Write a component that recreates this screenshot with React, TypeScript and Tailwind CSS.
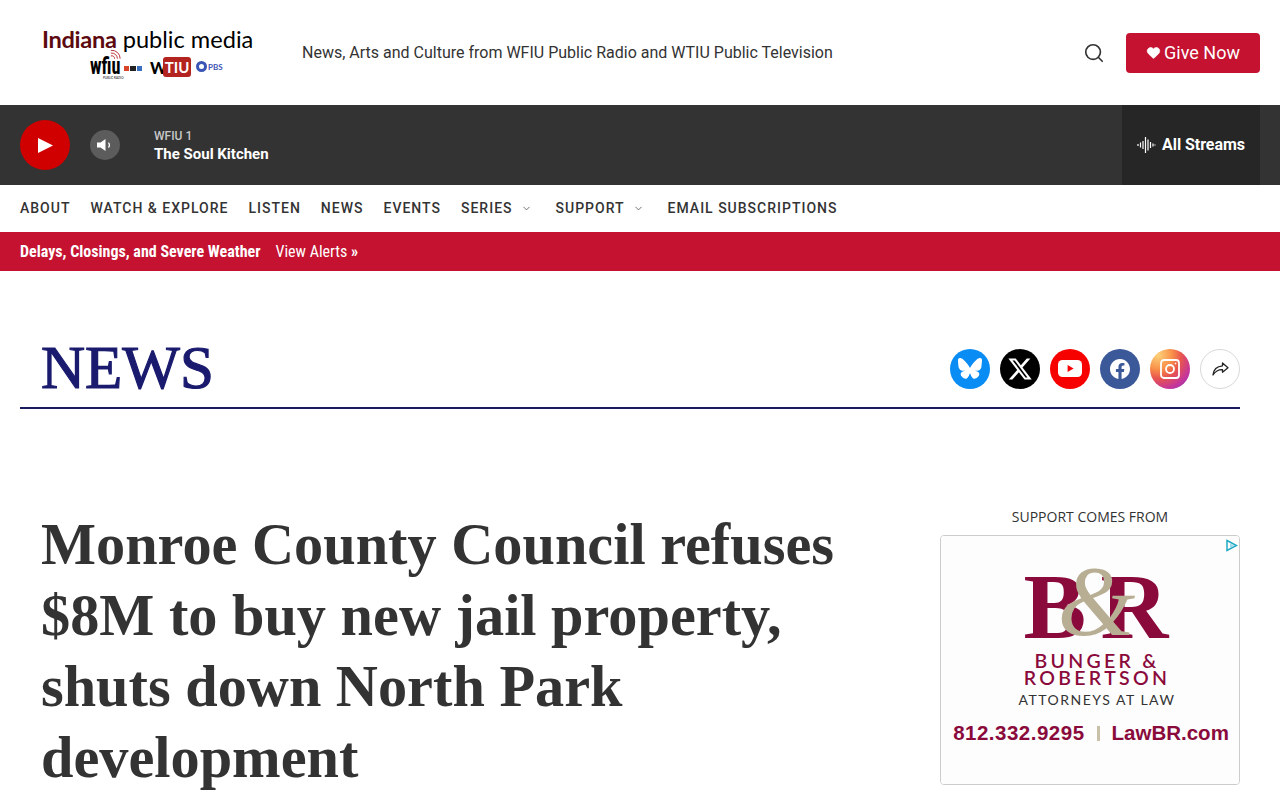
import { ChevronDown, Search, Heart } from 'lucide-react'

const roboto = { fontFamily: 'Roboto, sans-serif' }

const navItems = [
  { label: 'ABOUT' },
  { label: 'WATCH & EXPLORE' },
  { label: 'LISTEN' },
  { label: 'NEWS' },
  { label: 'EVENTS' },
  { label: 'SERIES', menu: true },
  { label: 'SUPPORT', menu: true },
  { label: 'EMAIL SUBSCRIPTIONS' },
]

function Logo() {
  return (
    <div className="w-[232px] ml-[22px] font-['Lato',sans-serif]">
      <div className="text-[23.6px] leading-[28px] text-black whitespace-nowrap h-[28px] -mt-[1px]">
        <span className="font-bold text-[#5c0a0f] tracking-[-0.3px]">Indiana</span> public media
      </div>
      <div className="flex items-start h-[26px] mt-[1px]">
        <div className="relative ml-[48px] w-[32px] h-[26px]">
          <span className="absolute left-0 top-[-1px] text-[24px] leading-[26px] font-bold text-black font-['Roboto_Condensed',sans-serif] scale-x-[0.76] origin-left">wfiu</span>
          <svg className="absolute left-[19px] top-[-5px]" width="13" height="12" viewBox="0 0 14 12" fill="none" stroke="#b3272d" strokeWidth="1">
            <path d="M2 1a9 9 0 0 1 10 9" />
            <path d="M2 4a6 6 0 0 1 7 6" />
            <path d="M2 7a3 3 0 0 1 4 3" />
          </svg>
          <span className="absolute left-[13px] top-[23px] text-[3px] leading-[3px] text-black whitespace-nowrap">PUBLIC RADIO</span>
        </div>
        <div className="flex mt-[12px] ml-[2px] h-[5px] w-[18px]">
          <span className="flex-1 bg-[#d8442a]" />
          <span className="flex-1 ml-[1px] bg-[#222]" />
          <span className="flex-1 ml-[1px] bg-[#3a6fc0]" />
        </div>
        <span className="ml-[8px] mt-[4px] w-[14px] text-[16px] leading-[20px] font-black text-black">W</span>
        <span className="ml-[-1px] mt-[3px] w-[28px] h-[20px] bg-[#b3231f] rounded-[3px] text-white text-[15px] leading-[20px] font-bold text-center">TIU</span>
        <span className="ml-[5px] mt-[7px] flex items-center text-[#3a55b5] text-[8px] leading-[12px] font-bold">
          <span className="w-[11px] h-[11px] rounded-full border-[3px] border-[#3a55b5] mr-[1px]" />
          PBS
        </span>
      </div>
    </div>
  )
}

function SocialIcons() {
  return (
    <div className="flex gap-[10px] mt-[1px]">
      <div className="w-10 h-10 rounded-full bg-[#0a8cf5] flex items-center justify-center">
        <svg width="24" height="22" viewBox="0 0 24 22" fill="#fff">
          <path d="M5.2 1.5C8 3.6 10.9 7.800 12 10c1.100-2.200 4-6.400 6.800-8.500C20.800 0 24-1.100 24 2.500c0 .7-.4 6-.7 6.900-.8 3-3.900 3.800-6.600 3.300 4.700.8 5.900 3.500 3.300 6.100-4.900 5-7-1.300-7.600-2.900-.1-.3-.2-.4-.4-.4s-.3.100-.4.400c-.6 1.600-2.700 7.900-7.600 2.900-2.600-2.600-1.400-5.300 3.300-6.100-2.700.5-5.800-.3-6.600-3.300C.4 8.500 0 3.200 0 2.500 0-1.100 3.200 0 5.200 1.500z" />
        </svg>
      </div>
      <div className="w-10 h-10 rounded-full bg-black flex items-center justify-center">
        <svg width="26" height="26" viewBox="0 0 24 24" fill="#fff">
          <path d="M18.244 2.250h3.308l-7.227 8.260 8.502 11.240H16.170l-5.214-6.817L4.990 21.750H1.680l7.730-8.835L1.254 2.250H8.080l4.713 6.231zm-1.161 17.520h1.833L7.084 4.126H5.117z" />
        </svg>
      </div>
      <div className="w-10 h-10 rounded-full bg-[#f70000] flex items-center justify-center">
        <svg width="24" height="17" viewBox="0 0 24 17">
          <rect width="24" height="17" rx="4.500" fill="#fff" />
          <path d="M9.600 5v7l6-3.500z" fill="#f70000" />
        </svg>
      </div>
      <div className="w-10 h-10 rounded-full bg-[#3b5998] flex items-center justify-center">
        <svg width="20" height="20" viewBox="0 0 24 24" fill="#fff">
          <path d="M24 12.070C24 5.400 18.630 0 12 0S0 5.400 0 12.070c0 6.030 4.390 11.030 10.130 11.930v-8.440H7.080v-3.490h3.050V9.410c0-3.020 1.790-4.690 4.530-4.690 1.310 0 2.690.24 2.690.24v2.970h-1.510c-1.490 0-1.960.93-1.960 1.880v2.260h3.330l-.53 3.490h-2.800V24C19.610 23.100 24 18.100 24 12.070z" />
        </svg>
      </div>
      <div className="w-10 h-10 rounded-full bg-[radial-gradient(circle_at_20%_15%,#fcd27a_0%,#f9914a_30%,#e8554e_50%,#c5359b_75%,#7a3fc4_100%)] flex items-center justify-center">
        <svg width="20" height="20" viewBox="0 0 20 20" fill="none" stroke="#fff" strokeWidth="1.800">
          <rect x="1" y="1" width="18" height="18" rx="3" />
          <circle cx="10" cy="10" r="4" />
          <circle cx="15.500" cy="4.500" r=".5" fill="#fff" strokeWidth=".8" />
        </svg>
      </div>
      <div className="w-10 h-10 rounded-full bg-white border border-[#d9d9d9] flex items-center justify-center">
        <svg width="17" height="14" viewBox="0 0 17 14" fill="none" stroke="#222" strokeWidth="1.300" strokeLinejoin="round">
          <path d="M10.500 1 16 5.800l-5.500 4.400V7.700C6.500 7.500 3.500 9.200 1 13c.5-5.300 3.800-8.700 9.500-9.200z" />
        </svg>
      </div>
    </div>
  )
}

function AdLogo() {
  return (
    <div className="w-[298px] h-[248px] bg-[#fdfdfd] flex flex-col items-center relative">
      <svg className="absolute right-[1px] top-[3px]" width="13" height="13" viewBox="0 0 13 13" fill="none">
        <path d="M2 1.500 11.500 6.500 2 11.500z" stroke="#22aac4" strokeWidth="1.500" />
        <path d="M5 4.500 9 6.500 5 9z" fill="#9fd8e8" />
      </svg>
      <div className="relative w-[146px] h-[78px] mt-[33px] ml-[13px] font-['Liberation_Serif',serif] font-bold text-[#8a0a3c]">
        <span className="absolute left-0 top-[-11px] text-[94px] leading-[96px]">B</span>
        <span className="absolute left-[77px] top-[-11px] text-[94px] leading-[96px]">R</span>
        <span className="absolute left-[34px] top-[-22px] text-[100px] leading-[108px] text-[#b8ae94] font-normal italic">&amp;</span>
      </div>
      <div className="mt-[5px] ml-[14px] font-['Lato',sans-serif] text-[#8a0a3c] text-[19.500px] leading-[17px] font-semibold tracking-[3.300px] text-center">
        <div>BUNGER &amp;</div>
        <div>ROBERTSON</div>
      </div>
      <div className="mt-[5px] ml-[14px] font-['Lato',sans-serif] text-[#333] text-[14px] leading-[18px] tracking-[1.500px]">ATTORNEYS AT LAW</div>
      <div className="mt-[10px] ml-[2px] flex items-center font-['Liberation_Sans',sans-serif] font-bold text-[#8a0a3c] text-[20.500px] leading-[28px] whitespace-nowrap">
        <span className="tracking-[0.500px]">812.332.9295</span>
        <span className="w-[3px] h-[15px] bg-[#c8c0a8] mx-[12px]" />
        <span>LawBR.com</span>
      </div>
    </div>
  )
}

export default function App() {
  return (
    <div className="w-[1280px] h-[800px] overflow-hidden bg-white" style={roboto}>
      <header className="h-[105px] flex items-center pr-5">
        <div className="ml-[20px]">
          <Logo />
        </div>
        <p className="ml-[28px] text-[16px] text-[#333]">News, Arts and Culture from WFIU Public Radio and WTIU Public Television</p>
        <Search size={22} strokeWidth={1.800} className="ml-auto mr-[1px] text-[#333]" />
        <button className="ml-[20px] w-[134px] h-10 bg-[#c41230] rounded-[4px] text-white text-[18px] flex items-center justify-center gap-[3px]">
          <Heart size={15} fill="#fff" strokeWidth={1} />
          Give Now
        </button>
      </header>

      <div className="h-20 bg-[#333333] flex items-center pl-5 pr-5">
        <div className="w-[50px] h-[50px] rounded-full bg-[#d00000] flex items-center justify-center">
          <svg width="15" height="15" viewBox="0 0 15 15" fill="#fff"><path d="M0 0 15 7.500 0 15z" /></svg>
        </div>
        <div className="ml-5 w-[30px] h-[30px] rounded-full bg-[#5c5c5c] flex items-center justify-center">
          <svg width="16" height="14" viewBox="0 0 16 14" fill="none">
            <path d="M0 4.500h3.500L8.500 1v12L3.500 9.500H0z" fill="#fff" />
            <path d="M11.500 4.500a4 4 0 0 1 0 5" stroke="#fff" strokeWidth="1.200" />
          </svg>
        </div>
        <div className="ml-[34px]">
          <div className="text-[12px] leading-[16px] font-medium text-[#c8c8c8] mt-[1px]">WFIU 1</div>
          <div className="text-[15px] leading-[20px] font-bold text-white">The Soul Kitchen</div>
        </div>
        <div className="ml-auto w-[138px] h-20 bg-[#262626] flex items-center justify-center gap-[6px]">
          <svg width="19" height="18" viewBox="0 0 19 18" fill="none" stroke="#fff" strokeWidth="1.200">
            <path d="M1 8v2M3.500 6.500v5M6 5v8M8.500 1v16M11 3.500v11M13.500 6v6M16 7.500v3M18 8.500v1" />
          </svg>
          <span className="text-[16px] font-bold text-white tracking-[-0.05px]">All Streams</span>
        </div>
      </div>

      <nav className="h-[47px] flex items-center pl-5 gap-5 text-[14px] font-medium text-[#333] tracking-[1px]">
        {navItems.map((item) => (
          <span key={item.label} className="flex items-center whitespace-nowrap">
            {item.label}
            {item.menu && <ChevronDown size={11} strokeWidth={1.500} className="ml-[8px] mr-[4px] text-[#333]" />}
          </span>
        ))}
      </nav>

      <div className="h-[39px] bg-[#c41230] flex items-center gap-[15px] pl-5 text-white text-[16px] font-['Roboto_Condensed','Roboto',sans-serif]">
        <span className="font-bold whitespace-nowrap">Delays, Closings, and Severe Weather</span>
        <span className="whitespace-nowrap">View Alerts <b>»</b></span>
      </div>

      <div className="ml-5 mr-10 mt-[58px] h-[80px] border-b-2 border-[#1c1a5e] flex items-center justify-between">
        <h2 className="ml-[21px] font-['Liberation_Serif',serif] font-normal text-[#1a1a6e] text-[61px] leading-[78px] [-webkit-text-stroke:1.2px_#1a1a6e]">NEWS</h2>
        <SocialIcons />
      </div>

      <div className="mt-[100px] ml-5 mr-10 flex justify-between">
        <h1 className="ml-[21px] w-[820px] font-['Liberation_Serif',serif] font-bold text-[#333] text-[58.300px] leading-[71px]">
          Monroe County Council refuses $8M to buy new jail property, shuts down North Park development
        </h1>
        <aside className="w-[300px] -mt-[1px]">
          <div className="text-center text-[14px] leading-[18px] text-[#333] font-['Open_Sans',sans-serif] mb-[9px] font-medium">SUPPORT COMES FROM</div>
          <div className="border border-[#ccc] rounded-[4px] overflow-hidden">
            <AdLogo />
          </div>
        </aside>
      </div>
    </div>
  )
}
